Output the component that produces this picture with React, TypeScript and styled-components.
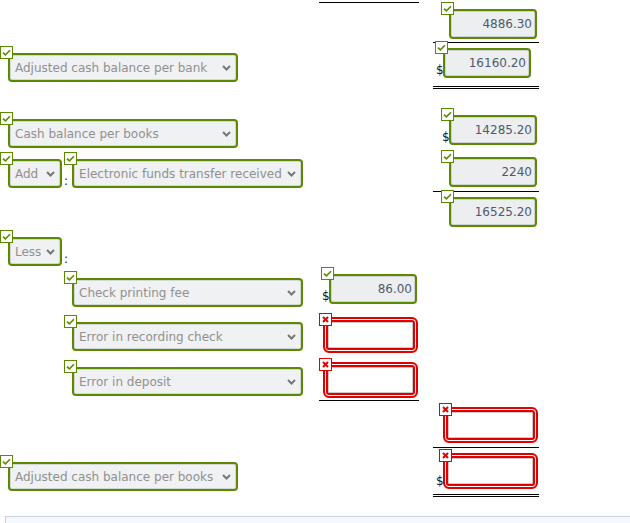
import React from 'react';
import styled, { createGlobalStyle, css } from 'styled-components';

const GREEN = '#5b8a00';
const RED = '#e00000';

const GlobalStyle = createGlobalStyle`
  body {
    margin: 0;
    background: #ffffff;
    font-family: "DejaVu Sans", Verdana, sans-serif;
  }
`;

const Sheet = styled.div`
  width: 630px;
  padding-top: 2px;
`;

const Row = styled.div<{ $h: number }>`
  display: grid;
  grid-template-columns: 319px 100px 14px 106px;
  height: ${({ $h }) => $h}px;
`;

type Rule = 'top' | 'bottom' | 'double';

const rules = {
  top: css`border-top: 1px solid #000;`,
  bottom: css`border-bottom: 1px solid #000;`,
  double: css`border-bottom: 3px double #000;`,
};

const Cell = styled.div<{ $pt?: number; $pl?: number; $rule?: Rule }>`
  box-sizing: border-box;
  display: flex;
  align-items: flex-start;
  padding-top: ${({ $pt = 0 }) => $pt}px;
  padding-left: ${({ $pl = 0 }) => $pl}px;
  ${({ $rule }) => ($rule ? rules[$rule] : '')}
`;

const Spacer = styled.div``;

const Line = styled.div`
  display: flex;
  align-items: flex-end;
`;

const Field = styled.div`
  position: relative;
  display: inline-flex;
`;

const Badge = styled.span<{ $bad?: boolean }>`
  position: absolute;
  left: ${({ $bad }) => ($bad ? -4 : -8)}px;
  top: ${({ $bad }) => ($bad ? -4 : -7)}px;
  width: 13px;
  height: 13px;
  box-sizing: border-box;
  border: 1px solid ${({ $bad }) => ($bad ? RED : GREEN)};
  background: #fff;
  display: flex;
  align-items: center;
  justify-content: center;
  z-index: 2;
`;

const SelectBox = styled.div<{ $w: number }>`
  box-sizing: border-box;
  width: ${({ $w }) => $w}px;
  height: 29px;
  border: 2px solid ${GREEN};
  border-radius: 4px;
  background: #f0f1f3;
  box-shadow: inset 0 0 0 1px #d4d6d9;
  display: flex;
  align-items: center;
  justify-content: space-between;
  padding: 1px 5px 0 5px;
  font-size: 12px;
  color: #909090;
  white-space: nowrap;
`;

const Amount = styled.input<{ $w?: number }>`
  box-sizing: border-box;
  width: ${({ $w = 88 }) => $w}px;
  height: 30px;
  border: 2px solid ${GREEN};
  border-radius: 4px;
  background: #eceef0;
  box-shadow: inset 0 0 0 1px #cfd1d4;
  text-align: right;
  padding: 0 3px 0 0;
  margin: 0;
  font-family: "DejaVu Sans", Verdana, sans-serif;
  font-size: 12px;
  color: #4f5a6b;
  outline: none;
`;

const EmptyAmount = styled.input<{ $w?: number }>`
  box-sizing: border-box;
  width: ${({ $w = 95 }) => $w}px;
  height: 36px;
  border: 2px solid ${RED};
  border-radius: 6px;
  background: #fff;
  box-shadow: inset 0 0 0 1px #fff, inset 0 0 0 3px ${RED}, inset 0 0 0 4px #c8c8c8;
  margin: 0;
  padding: 0;
  outline: none;
`;

const Dollar = styled.span`
  font-size: 12px;
  line-height: 12px;
  color: #111;
  width: 7px;
  margin-bottom: 2px;
`;

const Colon = styled.span`
  font-size: 12px;
  line-height: 12px;
  color: #222;
  margin: 0 4px 1px 2px;
`;

const Panel = styled.div`
  margin: 19px 0 0 5px;
  height: 6px;
  border: 1px solid #c9d1de;
  border-right: none;
  border-bottom: none;
  background: #f5f8fd;
`;

const Check = () => (
  <svg width="9" height="7" viewBox="0 0 9 7">
    <path d="M1 3.6 L3.4 5.8 L8 1.2" fill="none" stroke={GREEN} strokeWidth="1.6" />
  </svg>
);

const Cross = () => (
  <svg width="7" height="7" viewBox="0 0 7 7">
    <path d="M1 1 L6 6 M6 1 L1 6" fill="none" stroke={RED} strokeWidth="2" />
  </svg>
);

const Chevron = () => (
  <svg width="9" height="6" viewBox="0 0 9 6">
    <path d="M1 1 L4.5 4.5 L8 1" fill="none" stroke="#777" strokeWidth="2" />
  </svg>
);

const Select: React.FC<{ label: string; width: number }> = ({ label, width }) => (
  <Field>
    <Badge>
      <Check />
    </Badge>
    <SelectBox $w={width}>
      <span>{label}</span>
      <Chevron />
    </SelectBox>
  </Field>
);

const Money: React.FC<{ value: string; dollar?: boolean; width?: number }> = ({ value, dollar, width }) => (
  <Line>
    {dollar && <Dollar>$</Dollar>}
    <Field>
      <Badge>
        <Check />
      </Badge>
      <Amount readOnly value={value} $w={width} />
    </Field>
  </Line>
);

const Wrong: React.FC<{ dollar?: boolean }> = ({ dollar }) => (
  <Line>
    {dollar && <Dollar>$</Dollar>}
    <Field>
      <Badge $bad>
        <Cross />
      </Badge>
      <EmptyAmount readOnly value="" />
    </Field>
  </Line>
);

export default function App() {
  return (
    <Sheet>
      <GlobalStyle />

      <Row $h={41}>
        <Spacer />
        <Cell $rule="top" />
        <Spacer />
        <Cell $rule="bottom" $pt={7} $pl={16}>
          <Money value="4886.30" />
        </Cell>
      </Row>

      <Row $h={46}>
        <Cell $pt={10} $pl={8}>
          <Select label="Adjusted cash balance per bank" width={230} />
        </Cell>
        <Spacer />
        <Spacer />
        <Cell $rule="double" $pt={5} $pl={3}>
          <Money value="16160.20" dollar />
        </Cell>
      </Row>

      <Row $h={61}>
        <Cell $pt={30} $pl={8}>
          <Select label="Cash balance per books" width={230} />
        </Cell>
        <Spacer />
        <Spacer />
        <Cell $pt={26} $pl={9}>
          <Money value="14285.20" dollar />
        </Cell>
      </Row>

      <Row $h={42}>
        <Cell $pt={9} $pl={8}>
          <Line>
            <Select label="Add" width={54} />
            <Colon>:</Colon>
            <Select label="Electronic funds transfer received" width={231} />
          </Line>
        </Cell>
        <Spacer />
        <Spacer />
        <Cell $rule="bottom" $pt={7} $pl={16}>
          <Money value="2240" />
        </Cell>
      </Row>

      <Row $h={37}>
        <Spacer />
        <Spacer />
        <Spacer />
        <Cell $pt={5} $pl={16}>
          <Money value="16525.20" />
        </Cell>
      </Row>

      <Row $h={40}>
        <Cell $pt={8} $pl={8}>
          <Line>
            <Select label="Less" width={54} />
            <Colon>:</Colon>
          </Line>
        </Cell>
      </Row>

      <Row $h={44}>
        <Cell $pt={9} $pl={72}>
          <Select label="Check printing fee" width={231} />
        </Cell>
        <Cell $pt={5} $pl={3}>
          <Money value="86.00" dollar />
        </Cell>
      </Row>

      <Row $h={45}>
        <Cell $pt={9} $pl={72}>
          <Select label="Error in recording check" width={231} />
        </Cell>
        <Cell $pt={4} $pl={4}>
          <Wrong />
        </Cell>
      </Row>

      <Row $h={43}>
        <Cell $pt={9} $pl={72}>
          <Select label="Error in deposit" width={231} />
        </Cell>
        <Cell $rule="bottom" $pt={4} $pl={4}>
          <Wrong />
        </Cell>
      </Row>

      <Row $h={47}>
        <Spacer />
        <Spacer />
        <Spacer />
        <Cell $rule="bottom" $pt={6} $pl={10}>
          <Wrong />
        </Cell>
      </Row>

      <Row $h={49}>
        <Cell $pt={14} $pl={8}>
          <Select label="Adjusted cash balance per books" width={230} />
        </Cell>
        <Spacer />
        <Spacer />
        <Cell $rule="double" $pt={5} $pl={3}>
          <Wrong dollar />
        </Cell>
      </Row>

      <Panel />
    </Sheet>
  );
}
